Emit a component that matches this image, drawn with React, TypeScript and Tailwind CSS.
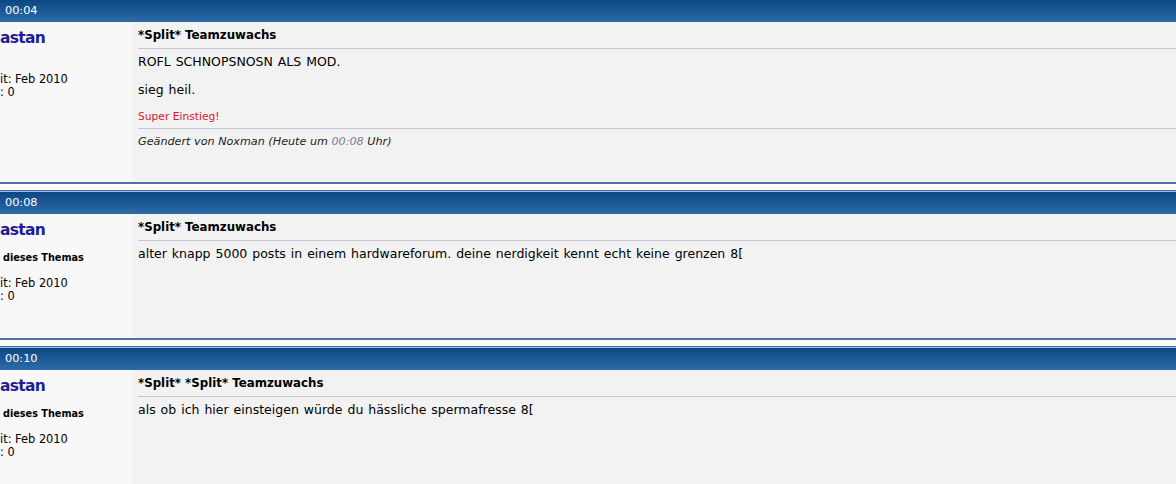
import React from "react"

type Post = {
  time: string
  title: string
  byThreadAuthor: boolean
  bodyHeight: string
  content: React.ReactNode
}

function PostHeader({ time }: { time: string }) {
  return (
    <div className="h-[24px] bg-[linear-gradient(to_bottom,#3d6aa0_0px,#3d6aa0_1px,#a7bdd8_1px,#a7bdd8_2px,#0c4784_2px,#2e6ba7_100%)] pt-[2px]">
      <div className="flex h-[22px] items-center pl-[5px] text-[11.3px] text-white">{time}</div>
    </div>
  )
}

function PostBlock({ post, first }: { post: Post; first?: boolean }) {
  return (
    <div className={first ? "-mt-[2px] mb-[6px]" : "mb-[6px]"}>
      <PostHeader time={post.time} />
      <div className={`flex border-b-2 border-[#4a73a6] ${post.bodyHeight}`}>
        {/* user info column */}
        <div className="w-[132px] shrink-0 bg-[#f8f8f8] pt-[6px] text-black">
          <div className="text-[15.5px] font-bold leading-[20px] tracking-[-0.7px] text-[#1e1e96]">astan</div>
          {post.byThreadAuthor && (
            <div className="mt-[12px] pl-[3px] text-[9.7px] font-bold leading-[12px]">dieses Themas</div>
          )}
          <div
            className={`${post.byThreadAuthor ? "mt-[13px]" : "mt-[25px]"} text-[11.4px] leading-[13px]`}
          >
            <div>it: Feb 2010</div>
            <div>: 0</div>
          </div>
        </div>

        {/* message column */}
        <div className="flex-1 bg-[#f2f2f2] pl-[6px] text-black">
          <div className="border-b border-[#c5c5da] pb-[6px] pt-[7px] text-[11.8px] font-bold leading-[13px]">
            {post.title}
          </div>
          {post.content}
        </div>
      </div>
    </div>
  )
}

const bodyText = "mt-[6px] text-[12.5px] leading-[14px] [word-spacing:1px]"

const posts: Post[] = [
  {
    time: "00:04",
    title: "*Split* Teamzuwachs",
    byThreadAuthor: false,
    bodyHeight: "h-[162px]",
    content: (
      <>
        <div className={bodyText}>
          ROFL SCHNOPSNOSN ALS MOD.
          <br />
          <br />
          sieg heil.
        </div>
        <div className="mt-[14px] border-b border-[#c5c5da] pb-[5px] text-[10.7px] leading-[12px] text-[#e0142c]">
          Super Einstieg!
        </div>
        <div className="mt-[6px] text-[11.2px] italic leading-[14px] text-[#222]">
          Geändert von Noxman (Heute um <span className="text-[#7a7a96]">00:08</span> Uhr)
        </div>
      </>
    ),
  },
  {
    time: "00:08",
    title: "*Split* Teamzuwachs",
    byThreadAuthor: true,
    bodyHeight: "h-[126px]",
    content: (
      <div className={bodyText}>
        alter knapp 5000 posts in einem hardwareforum. deine nerdigkeit kennt echt keine grenzen 8[
      </div>
    ),
  },
  {
    time: "00:10",
    title: "*Split* *Split* Teamzuwachs",
    byThreadAuthor: true,
    bodyHeight: "h-[140px]",
    content: (
      <div className={bodyText}>
        als ob ich hier einsteigen würde du hässliche spermafresse 8[
      </div>
    ),
  },
]

export default function App() {
  return (
    <div className="h-[484px] w-[1176px] overflow-hidden bg-white font-['DejaVu_Sans',Verdana,sans-serif]">
      {posts.map((p, i) => (
        <PostBlock key={p.time} post={p} first={i === 0} />
      ))}
    </div>
  )
}
